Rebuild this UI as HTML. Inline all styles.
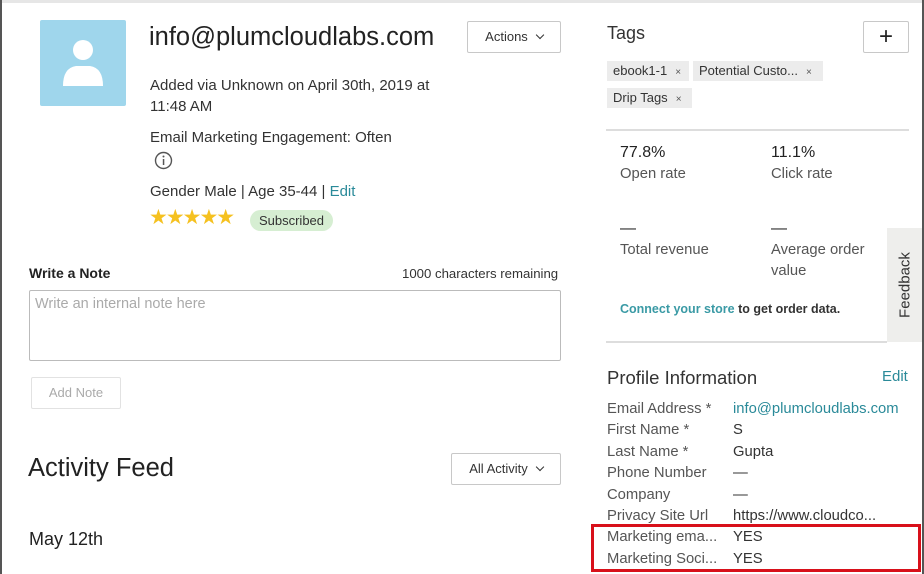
<!DOCTYPE html>
<html><head><meta charset="utf-8"><style>
*{margin:0;padding:0;box-sizing:border-box}
body{width:924px;height:574px;overflow:hidden;background:#fff;font-family:"Liberation Sans",sans-serif;color:#333;position:relative}
.a{position:absolute;white-space:nowrap}
.btn{position:absolute;border:1px solid #c8c8c8;border-radius:2px;background:#fff;font-size:13px;color:#333;text-align:center}
.chip{position:absolute;background:#ececec;font-size:13px;color:#333;height:20px;line-height:20px;padding-left:6px}
.chip i{font-style:normal;font-size:10px;color:#555;margin-left:8px}
.lbl{position:absolute;left:607px;font-size:14.8px;color:#555}
.val{position:absolute;left:733px;font-size:14.8px;color:#333}
.chev{display:inline-block;width:6px;height:6px;border-right:1.6px solid #333;border-bottom:1.6px solid #333;transform:rotate(45deg);margin-left:9px;vertical-align:3px}
</style></head><body>
<div class="a" style="left:0;top:0;width:924px;height:3px;background:#e6e6e6"></div>
<div class="a" style="left:0;top:0;width:2px;height:574px;background:#555"></div>
<div class="a" style="left:922px;top:0;width:2px;height:574px;background:#555"></div>

<div class="a" style="left:40px;top:20px;width:86px;height:86px;background:#9fd6ec;border-radius:2px">
<svg width="86" height="86" viewBox="0 0 86 86"><circle cx="43" cy="30" r="10" fill="#fff"/><path d="M23 66 Q23 48 36 46 L50 46 Q63 48 63 66 Z" fill="#fff"/></svg></div>
<div class="a" style="left:149px;top:23px;font-size:25.5px;color:#222">info@plumcloudlabs.com</div>
<div class="btn" style="left:467px;top:21px;width:94px;height:32px;line-height:30px">Actions<span class="chev"></span></div>
<div class="a" style="left:150px;top:75px;font-size:15px;line-height:21px;color:#333">Added via Unknown on April 30th, 2019 at<br>11:48 AM</div>
<div class="a" style="left:150px;top:129px;font-size:15px">Email Marketing Engagement: Often</div>
<svg class="a" style="left:154px;top:151px" width="19" height="19"><circle cx="9.5" cy="9.5" r="8" fill="none" stroke="#555" stroke-width="1.4"/><rect x="8.8" y="8" width="1.5" height="6" fill="#555"/><circle cx="9.5" cy="5.5" r="1" fill="#555"/></svg>
<div class="a" style="left:150px;top:183px;font-size:15px">Gender Male | Age 35-44 | <span style="color:#2a8a99">Edit</span></div>
<div class="a" style="left:149px;top:205px;font-size:21px;color:#f5c120;letter-spacing:-2px">★★★★★</div>
<div class="a" style="left:250px;top:210px;width:83px;height:21px;background:#d6eed2;border-radius:11px;font-size:13px;line-height:21px;text-align:center;color:#333">Subscribed</div>

<div class="a" style="left:29px;top:265px;font-size:14px;font-weight:bold;color:#222">Write a Note</div>
<div class="a" style="left:402px;top:266px;font-size:13.2px;color:#333">1000 characters remaining</div>
<div class="a" style="left:29px;top:290px;width:532px;height:71px;border:1px solid #bbb;border-radius:2px"></div>
<div class="a" style="left:35px;top:296px;font-size:14.5px;color:#aaa">Write an internal note here</div>
<div class="btn" style="left:31px;top:377px;width:90px;height:32px;line-height:30px;color:#aaa;border-color:#e2e2e2">Add Note</div>

<div class="a" style="left:28px;top:454px;font-size:25.5px;color:#222">Activity Feed</div>
<div class="btn" style="left:451px;top:453px;width:110px;height:32px;line-height:30px">All Activity<span class="chev"></span></div>
<div class="a" style="left:29px;top:529px;font-size:18px;color:#222">May 12th</div>

<div class="a" style="left:607px;top:23px;font-size:18px;color:#333">Tags</div>
<div class="btn" style="left:863px;top:21px;width:46px;height:32px;line-height:29px;font-size:24px;color:#222">+</div>
<div class="chip" style="left:607px;top:61px;width:82px">ebook1-1<i>×</i></div>
<div class="chip" style="left:693px;top:61px;width:130px">Potential Custo...<i>×</i></div>
<div class="chip" style="left:607px;top:88px;width:85px">Drip Tags<i>×</i></div>
<div class="a" style="left:606px;top:129px;width:303px;height:2px;background:#ddd"></div>
<div class="a" style="left:620px;top:144px;font-size:16px;color:#222">77.8%</div>
<div class="a" style="left:620px;top:166px;font-size:14.8px;color:#555">Open rate</div>
<div class="a" style="left:771px;top:144px;font-size:16px;color:#222">11.1%</div>
<div class="a" style="left:771px;top:166px;font-size:14.8px;color:#555">Click rate</div>
<div class="a" style="left:620px;top:220px;font-size:16px;color:#222">—</div>
<div class="a" style="left:620px;top:242px;font-size:14.8px;color:#555">Total revenue</div>
<div class="a" style="left:771px;top:220px;font-size:16px;color:#222">—</div>
<div class="a" style="left:771px;top:240px;font-size:14.8px;color:#555;line-height:21px">Average order<br>value</div>
<div class="a" style="left:620px;top:302px;font-size:12.5px;font-weight:bold;color:#333"><span style="color:#3a9aa5">Connect your store</span> to get order data.</div>
<div class="a" style="left:887px;top:228px;width:35px;height:114px;background:#eeeeec"></div>
<div class="a" style="left:905px;top:285px;font-size:15px;color:#333;transform:translate(-50%,-50%) rotate(-90deg)">Feedback</div>
<div class="a" style="left:606px;top:341px;width:281px;height:2px;background:#ddd"></div>

<div class="a" style="left:607px;top:367px;font-size:18.5px;color:#333">Profile Information</div>
<div class="a" style="left:882px;top:368px;font-size:15px;color:#2a8a99">Edit</div>
<div class="lbl" style="top:401px">Email Address *</div><div class="val" style="top:401px;color:#2a8a99">info@plumcloudlabs.com</div>
<div class="lbl" style="top:422px">First Name *</div><div class="val" style="top:422px">S</div>
<div class="lbl" style="top:444px">Last Name *</div><div class="val" style="top:444px">Gupta</div>
<div class="lbl" style="top:465px">Phone Number</div><div class="val" style="top:465px">—</div>
<div class="lbl" style="top:487px">Company</div><div class="val" style="top:487px">—</div>
<div class="lbl" style="top:508px">Privacy Site Url</div><div class="val" style="top:508px">https://www.cloudco...</div>
<div class="lbl" style="top:529px">Marketing ema...</div><div class="val" style="top:529px">YES</div>
<div class="lbl" style="top:551px">Marketing Soci...</div><div class="val" style="top:551px">YES</div>
<div class="a" style="left:591px;top:524px;width:330px;height:48px;border:3px solid #d8101a"></div>
</body></html>
